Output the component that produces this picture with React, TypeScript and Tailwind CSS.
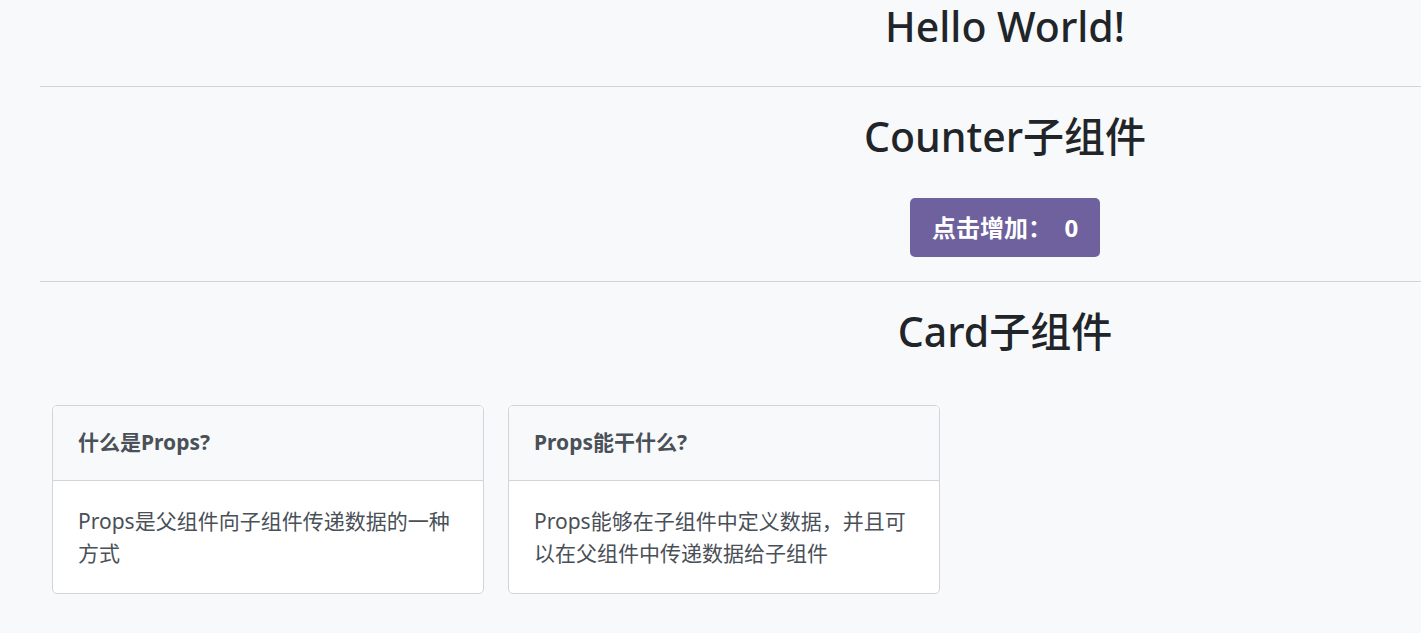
import React, { useState } from "react";

const font = { fontFamily: '"Noto Sans", "Noto Sans CJK SC", sans-serif' };

type CardProps = {
  title: string;
  content: string;
};

function Card({ title, content }: CardProps) {
  return (
    <div className="w-[432px] overflow-hidden rounded-[5px] border border-[#d2d4d7] bg-white">
      <div className="flex h-[75px] items-center border-b border-[#d2d4d7] bg-[#f8f9fa] px-[25px] text-[21px] font-bold text-[#495057]">
        {title}
      </div>
      <div className="px-[25px] py-[24px] text-[21px] leading-[32px] text-[#495057]">{content}</div>
    </div>
  );
}

export default function App() {
  const [count, setCount] = useState(0);

  return (
    <div className="min-h-screen overflow-hidden bg-[#f8f9fa] text-[#212529]" style={font}>
      <div className="ml-[40px] w-[1930px]">
        <h1 className="pt-[1px] text-center text-[41px] font-medium leading-[50px]">Hello World!</h1>
        <hr className="mt-[35px] border-t border-[#d3d4d6]" />

        <h2 className="mt-[24px] text-center text-[41px] font-medium leading-[50px]">Counter子组件</h2>
        <div className="mt-[37px] flex justify-center">
          <button
            type="button"
            onClick={() => setCount(count + 1)}
            className="h-[59px] rounded-[5px] bg-[#6f619d] px-[22px] text-[24px] font-bold text-white"
          >
            点击增加：&nbsp; {count}
          </button>
        </div>
        <hr className="mt-[24px] border-t border-[#d3d4d6]" />

        <h2 className="mt-[24px] text-center text-[41px] font-medium leading-[50px]">Card子组件</h2>
        <div className="mt-[49px] flex gap-[24px] pl-[12px]">
          <Card title="什么是Props?" content="Props是父组件向子组件传递数据的一种方式" />
          <Card title="Props能干什么?" content="Props能够在子组件中定义数据，并且可以在父组件中传递数据给子组件" />
        </div>
      </div>
    </div>
  );
}
